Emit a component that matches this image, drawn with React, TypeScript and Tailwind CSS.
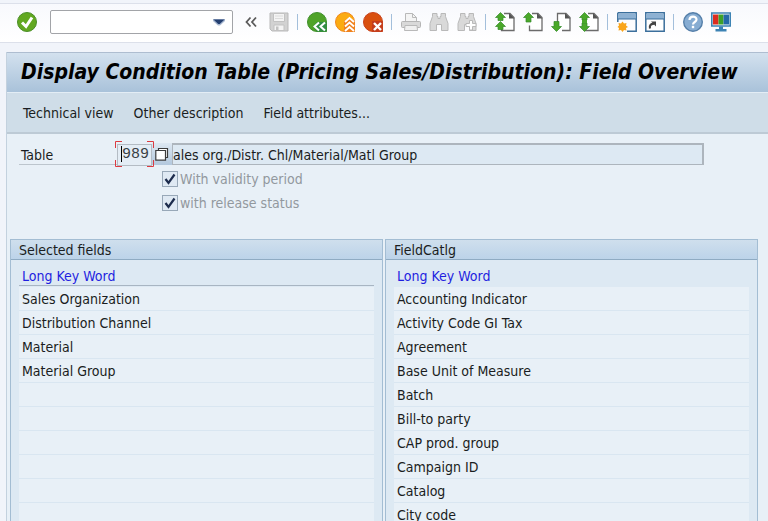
import type { ReactNode } from "react"

const selectedFields = ["Sales Organization", "Distribution Channel", "Material", "Material Group", "", "", "", "", "", ""]

const fieldCatalog = [
  "Accounting Indicator",
  "Activity Code GI Tax",
  "Agreement",
  "Base Unit of Measure",
  "Batch",
  "Bill-to party",
  "CAP prod. group",
  "Campaign ID",
  "Catalog",
  "City code",
]

function ToolButton({ label, disabled, children }: { label: string; disabled?: boolean; children: ReactNode }) {
  return (
    <button type="button" aria-label={label} disabled={disabled} className="size-5 shrink-0">
      <svg viewBox="0 0 20 20" className="size-5" fill="none">
        {children}
      </svg>
    </button>
  )
}

function Separator() {
  return <div className="h-4 w-0.5 shrink-0 border-l border-[#a3bfdb]" />
}

// Sheet with a folded corner, open on the left where the arrows sit
function Page() {
  return (
    <>
      <path d="M9 1.5h6l4 4v13H6.5v-5" fill="#fff" stroke="#6b6b6b" strokeWidth="1.3" />
      <path d="M14 1l5.5 5.5H14z" fill="#555" />
    </>
  )
}

function Binoculars() {
  return (
    <path
      d="M3.500 1.500H8v3h1v2h2v-2h1v-3h4.500v3l2.500 7v7h-6.500v-6h-5v6H1v-7l2.500-7z"
      fill="#d9d9d9"
      stroke="#b9b9b9"
    />
  )
}

function Toolbar() {
  return (
    <header className="mt-[3px] flex h-10 shrink-0 items-center gap-2 border-y border-[#dce0ea] bg-linear-to-b from-[#f8f9fd] to-white pb-0.5 pl-[17px]">
      <ToolButton label="Enter">
        <circle cx="10" cy="10" r="9.5" fill="#62a821" stroke="#4a8e28" />
        <path d="M5 10.5l4 4 6-9" stroke="#fff" strokeWidth="3" />
      </ToolButton>
      <div className="ml-[5px] flex h-6 w-[183px] shrink-0 items-center rounded-xs border border-[#a2a4a8] bg-white pr-1.5">
        <input type="text" aria-label="Command field" className="min-w-0 flex-1 px-1 text-sm outline-none" />
        <button type="button" aria-label="Command history" className="h-4 w-3.5">
          <svg viewBox="0 0 14 16" className="h-4 w-3.5">
            <path d="M1 5h12v2l-5 4.500H6L1 7z" fill="#a9b9d2" />
            <path d="M1.500 5.500h11L7.800 10H6.200z" fill="#243f70" />
          </svg>
        </button>
      </div>
      <ToolButton label="Collapse">
        <path d="M9.500 5.500L5.500 10l4 4.500M15 5.500L11 10l4 4.500" stroke="#5a5a5a" strokeWidth="1.800" />
      </ToolButton>
      <ToolButton label="Save" disabled>
        <path d="M1 1h18v18H3l-2-2z" fill="#d2d2d2" stroke="#b9b9b9" />
        <path d="M4.500 1.500h11v8h-11zM5 13h10v5.500H5z" fill="#f4f4f4" stroke="#c2c2c2" />
        <path d="M6 4h8M6 6.500h8" stroke="#dcdcdc" />
        <path d="M7 14.500h2.500V18H7z" fill="#c2c2c2" />
      </ToolButton>
      <Separator />
      <ToolButton label="Back">
        <path d="M19.500 19.500H10A9.500 9.500 0 1 1 19.500 10z" fill="#4fa329" stroke="#3f8f2c" />
        <path d="M6 14.500l4-4.500h9.500v9.500H10z" fill="#318d45" />
        <path d="M12 10.500l-4.500 4 4.500 4M18 10.500l-4.500 4 4.500 4" stroke="#fff" strokeWidth="2" />
      </ToolButton>
      <ToolButton label="Exit">
        <path d="M19.500 19.500H10A9.500 9.500 0 1 1 19.500 10z" fill="#fbab12" stroke="#f0861b" />
        <path d="M9 9l5-3.500 5.500 3.500v10.500H9z" fill="#f07f1c" />
        <path d="M10 10l4.500-4 4.500 4M10 14.500l4.500-4 4.500 4M10 19l4.500-4 4.500 4" stroke="#fff" strokeWidth="1.900" />
      </ToolButton>
      <ToolButton label="Cancel">
        <path d="M19.500 19.500H10A9.500 9.500 0 1 1 19.500 10z" fill="#d9500f" stroke="#c8401a" />
        <path d="M9 9h10.500v10.500H9z" fill="#c43d1c" />
        <path d="M11 11l7 7M18 11l-7 7" stroke="#fff" strokeWidth="2.400" />
      </ToolButton>
      <Separator />
      <ToolButton label="Print" disabled>
        <path d="M4.500 9V1.500h7l4 4V9" fill="#f4f4f4" stroke="#b9b9b9" />
        <path d="M11.500 1.500v4h4" stroke="#b9b9b9" />
        <rect x=".5" y="9.500" width="19" height="6" rx="1" fill="#d9d9d9" stroke="#b5b5b5" />
        <path d="M4 13.500h12l.5 5h-13z" fill="#f0f0f0" stroke="#b9b9b9" />
      </ToolButton>
      <ToolButton label="Find" disabled>
        <Binoculars />
      </ToolButton>
      <ToolButton label="Find next" disabled>
        <Binoculars />
        <path d="M12.500 8.500h3v3h3.500v3h-3.500V18h-3v-3.500H9v-3h3.500z" fill="#fff" stroke="#b9b9b9" />
      </ToolButton>
      <Separator />
      <ToolButton label="First page">
        <Page />
        <path d="M5.500.5l5 5H8v3H3v-3H.5zM5.500 9.500l5 5H8v3H3v-3H.5z" fill="#4aa829" stroke="#338a2b" strokeWidth=".7" />
      </ToolButton>
      <ToolButton label="Previous page">
        <Page />
        <path d="M5.500.5l5 5H8v4.500H3V5.500H.5z" fill="#4aa829" stroke="#338a2b" strokeWidth=".7" />
      </ToolButton>
      <ToolButton label="Next page">
        <path d="M6.500 10V1.500H15l4 4v13h-8" fill="#fff" stroke="#6b6b6b" strokeWidth="1.300" />
        <path d="M14 1l5.500 5.500H14z" fill="#555" />
        <path d="M5.500 19.500l5-5H8V9.500H3v5H.5z" fill="#4aa829" stroke="#338a2b" strokeWidth=".7" />
      </ToolButton>
      <ToolButton label="Last page">
        <Page />
        <path d="M5.500.5l5 5H8V8H3V5.500H.5zM5.500 19.500l5-5H8V11H3v3.500H.5z" fill="#4aa829" stroke="#338a2b" strokeWidth=".7" />
        <path d="M3 8h5v3H3z" fill="#4aa829" />
      </ToolButton>
      <Separator />
      <ToolButton label="New session">
        <path d="M.8.8h18.400v18.400H10M.8.8V10" fill="none" stroke="#3b6f9c" strokeWidth="1.500" />
        <path d="M1.500 1.500h17v5.500h-17z" fill="#8db1d3" />
        <path d="M1 7h18" stroke="#3b6f9c" />
        <path d="M5.500 9.500l1.500 2 2.500-.5-.5 2.500 2 1.500-2 1 .5 2.500-2.500-.5-1.500 2-1.500-2-2.500.5.5-2.500-1.500-1 1.500-1.500-.5-2.500 2.500.5z" fill="#f9a51b" />
      </ToolButton>
      <ToolButton label="Create shortcut">
        <path d="M.8.8h18.400v18.400H.8z" fill="#fff" stroke="#3b6f9c" strokeWidth="1.500" />
        <path d="M1.500 1.500h17v5.500h-17z" fill="#8db1d3" />
        <path d="M1 7h18" stroke="#3b6f9c" />
        <path d="M5 16.500c-1-3 1-5 4-4.500" stroke="#444" strokeWidth="2.200" />
        <path d="M6 9.500h5v5z" fill="#444" />
      </ToolButton>
      <Separator />
      <ToolButton label="Help">
        <circle cx="10" cy="10" r="9.300" fill="#86acd2" stroke="#557fa9" strokeWidth="1.400" />
        <path d="M6.500 8c0-4.500 7-4.500 7-.5 0 2.500-3.500 2.500-3.500 5" stroke="#fff" strokeWidth="2.200" />
        <path d="M8.800 13.800h2.400v2.400H8.800z" fill="#fff" />
      </ToolButton>
      <ToolButton label="Customize local layout">
        <path d="M.8 1h18.400v13H.8z" fill="#fff" stroke="#3d83b4" strokeWidth="1.600" />
        <path d="M2 2.500h5.500v10H2z" fill="#dc2d20" />
        <path d="M7.500 2.500h5v10h-5z" fill="#3da129" />
        <path d="M12.500 2.500H18v10h-5.500z" fill="#2469a8" />
        <path d="M8 14.500h4V17h3.500v2.500h-11V17H8z" fill="#3d83b4" />
      </ToolButton>
    </header>
  )
}

function FieldTable({ title, rows, underline }: { title: string; rows: string[]; underline?: boolean }) {
  return (
    <section className="min-w-0 flex-1 border border-[#a3bdd3] bg-[#dde9f3]">
      <h2 className="h-5 border-b border-[#8fabc3] bg-linear-to-b from-[#cfdfed] to-[#bcd3e9] pl-2 leading-5">{title}</h2>
      <div className="px-2 pt-1">
        <table className="w-full table-fixed border-separate border-spacing-0">
          <thead>
            <tr>
              <th className="p-0 pb-px text-left leading-6 font-normal text-[#1f1fe0]">
                <div className={underline ? "h-[22px] border-b border-[#a8b5c2] pl-[3px]" : "h-[22px] pl-[3px]"}>
                  Long Key Word
                </div>
              </th>
            </tr>
          </thead>
          <tbody>
            {rows.map((row, i) => (
              <tr key={i}>
                <td className="h-6 border-b border-[#d9e6f1] bg-[#e8f0f7] p-0 pl-[3px] whitespace-nowrap">{row}</td>
              </tr>
            ))}
          </tbody>
        </table>
      </div>
    </section>
  )
}

function CheckRow({ id, label }: { id: string; label: string }) {
  return (
    <div className="flex h-6 items-center gap-0.5">
      <span className="relative size-4">
        <input
          id={id}
          type="checkbox"
          defaultChecked
          disabled
          className="block size-4 appearance-none border border-[#98a8b8] bg-[#dfe9f3]"
        />
        <svg viewBox="0 0 16 16" className="pointer-events-none absolute inset-0 size-4" fill="none">
          <path d="M3.500 8l3 4L12.500 3.500" stroke="#1d2c4d" strokeWidth="2.200" />
        </svg>
      </span>
      <label htmlFor={id} className="text-[#92989e]">
        {label}
      </label>
    </div>
  )
}

export default function App() {
  return (
    <div className="flex h-screen flex-col overflow-hidden bg-[#f1f4fa] font-['DejaVu_Sans_Condensed','DejaVu_Sans',sans-serif] text-[14px] leading-5 text-[#1a1d21]">
      <Toolbar />

      <main className="mt-[9px] ml-1.5 flex-1 border-l border-[#c3d1de] bg-[#e8f0f7]">
        <div className="flex h-10 items-center border-t border-[#aebdd0] bg-linear-to-b from-[#d3e1ee] to-[#a9c2da] pb-0.5 pl-3.5">
          <h1 className="text-[21px] leading-6 font-bold whitespace-nowrap text-black italic">
            Display Condition Table (Pricing Sales/Distribution): Field Overview
          </h1>
        </div>
        <nav className="flex h-[42px] items-center gap-5 border-t border-b-2 border-t-[#e3edf5] border-b-[#bdcad5] bg-[#cfdde8] pl-4">
          <button type="button">Technical view</button>
          <button type="button">Other description</button>
          <button type="button">Field attributes...</button>
        </nav>

        <form className="pt-2 pr-16 pl-3">
          <div className="flex h-6 items-center">
            <label htmlFor="table-no" className="h-[22px] w-[98px] shrink-0 border-b border-[#bcc5cd] pl-0.5 leading-6">
              Table
            </label>
            <div className="relative h-[22px] w-[35px] shrink-0">
              <input
                id="table-no"
                type="text"
                readOnly
                value="989"
                className="h-full w-full border border-[#b4bcc4] bg-[#e4edf5] pl-1 font-['Liberation_Mono',monospace] text-[15px] text-[#3a3f45] outline-none"
              />
              <svg viewBox="0 0 39 26" className="pointer-events-none absolute -top-0.5 -left-0.5 h-[26px] w-[39px]" fill="none">
                <path d="M7 .5H.5V7M32 .5h6.500V7M.5 19v6.500H7M38.500 19v6.500H32" stroke="#dc3a40" />
                <path d="M6.500 5v16" stroke="#000" />
              </svg>
            </div>
            <button
              type="button"
              aria-label="Value help"
              className="flex h-[22px] w-5 shrink-0 items-center justify-center bg-linear-to-b from-[#dde8f2] to-[#b3c8dd]"
            >
              <svg viewBox="0 0 14 14" className="size-3.5" fill="#fff" stroke="#3c3c3c" strokeWidth="1.200">
                <path d="M3.500 1.500h9v9h-9z" />
                <path d="M.8 3.500h9.700v9.700H.8z" />
              </svg>
            </button>
            <input
              type="text"
              readOnly
              aria-label="Table description"
              value="ales org./Distr. Chl/Material/Matl Group"
              className="h-[22px] min-w-0 flex-1 border border-t-2 border-r-2 border-[#adb5bd] bg-[#dde9f3] outline-none"
            />
          </div>
          <div className="mt-px ml-[143px]">
            <CheckRow id="validity" label="With validity period" />
            <CheckRow id="release" label="with release status" />
          </div>
        </form>

        <div className="mt-6 flex gap-0.5 pr-2.5 pl-[3px]">
          <FieldTable title="Selected fields" rows={selectedFields} underline />
          <FieldTable title="FieldCatlg" rows={fieldCatalog} />
        </div>
      </main>
    </div>
  )
}
